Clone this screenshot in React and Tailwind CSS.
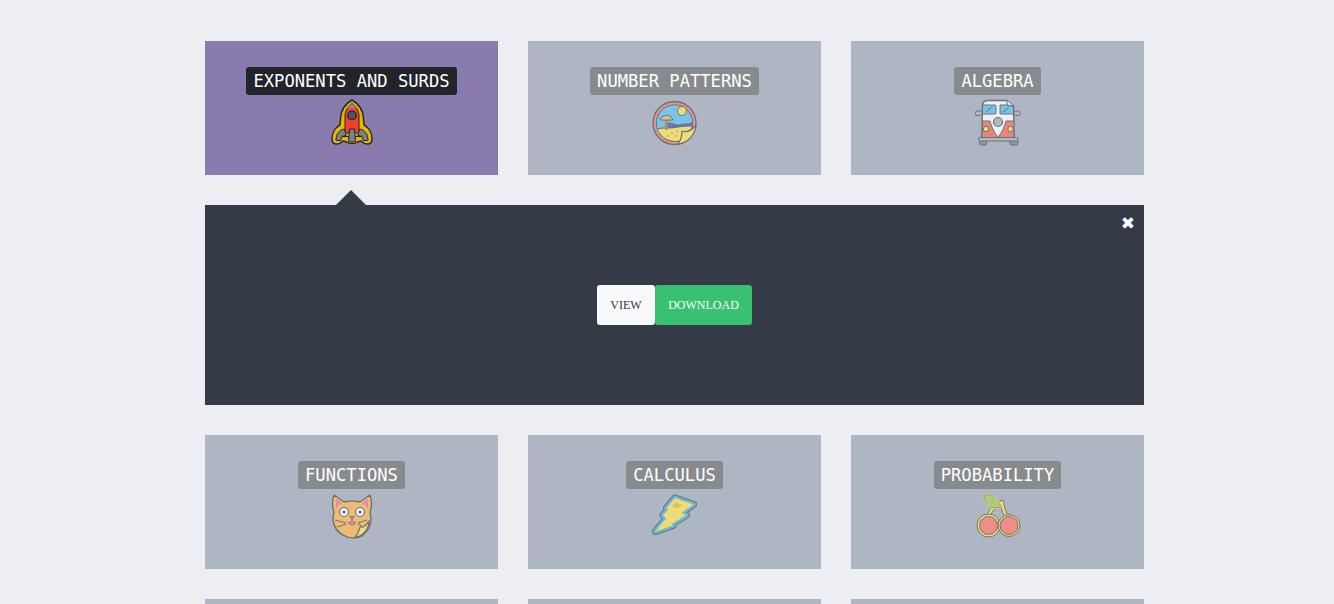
import React from 'react';

const outline = '#5c6066';

function Rocket() {
  const shell = 'M24 2 C31 6 35 13 35.5 20 L36 27 C40 29 44 34 44 41 C44 44.500 42 46 39.500 46 C37 46 35 45 33 43 L29 44 C27 46 21 46 19 44 L15 43 C13 45 11 46 8.500 46 C6 46 4 44.500 4 41 C4 34 8 29 12 27 L12.5 20 C13 13 17 6 24 2 Z';
  return (
    <svg viewBox="0 0 48 48" className="w-12 h-12">
      <path d={shell} fill="#e6b800" stroke="#26282c" strokeWidth="1.500" strokeLinejoin="round" />
      <path d="M24 5.500 C28 8 31 13 31 18 L31 35 L17 35 L17 18 C17 13 20 8 24 5.500 Z" fill="#f0402f" stroke="#26282c" strokeWidth="1" />
      <path d="M19.500 10 C21 8 23 6.500 24 6 C25 6.500 27 8 28.500 10 Z" fill="#8b8e94" />
      <circle cx="24" cy="17.500" r="4.300" fill="#4d5560" stroke="#26282c" strokeWidth="1.200" />
      <path d="M16.500 31 C11 32 8 36 8 42.500 L13 42.500 C13 39 15 37.500 18 37.500 Z" fill="#7b8087" stroke="#26282c" strokeWidth="1" strokeLinejoin="round" />
      <path d="M31.500 31 C37 32 40 36 40 42.500 L35 42.500 C35 39 33 37.500 30 37.500 Z" fill="#7b8087" stroke="#26282c" strokeWidth="1" strokeLinejoin="round" />
      <path d="M14 38.500 L34 38.500" stroke="#26282c" strokeWidth="1.200" />
      <path d="M21.500 31 L26.500 31 L27.500 43 C25.500 44.500 22.500 44.500 20.500 43 Z" fill="#7b8087" stroke="#26282c" strokeWidth="1" strokeLinejoin="round" />
    </svg>
  );
}

function Beach() {
  return (
    <svg viewBox="0 0 48 48" className="w-12 h-12">
      <circle cx="23.500" cy="25" r="21.500" fill="#ef8c7c" stroke={outline} strokeWidth="1.300" />
      <circle cx="23.500" cy="25" r="18.200" fill="#6fc7ef" stroke={outline} strokeWidth="1" />
      <circle cx="31" cy="13" r="4.500" fill="#ffe763" stroke={outline} strokeWidth="1" />
      <path d="M14 25 C20 23 25 28 30 26 C34 25 38 26 41.500 24 L41.500 30 L14 32 Z" fill="#4f6bb0" />
      <path d="M6 31 C12 29 20 31 27 29 C33 28 38 28 41 28 C41 36 35 42 29 43 C20 45 10 41 6 31 Z" fill="#ffe763" stroke={outline} strokeWidth="1" />
      <path d="M15.500 32 L15.500 21" stroke="#b98a4e" strokeWidth="2.500" />
      <path d="M9 22 C11 16 20 16 22 22 Z" fill="#f0c864" stroke={outline} strokeWidth="1" />
      <path d="M27 46 C30 42 31 38 31 33 C36 35 40 33 45 27 C44 37 37 45 27 46 Z" fill="#ffe763" stroke={outline} strokeWidth="1.200" strokeLinejoin="round" />
      <circle cx="21" cy="35" r=".8" fill="#a9842e" />
      <circle cx="26" cy="33" r=".8" fill="#a9842e" />
      <circle cx="17" cy="38" r=".8" fill="#a9842e" />
      <circle cx="25" cy="38" r=".8" fill="#a9842e" />
    </svg>
  );
}

function Bus() {
  return (
    <svg viewBox="0 0 48 48" className="w-12 h-12">
      <rect x="5.500" y="41" width="7" height="6" rx="1.500" fill="#8b9098" stroke={outline} />
      <rect x="36" y="41" width="8" height="6" rx="1.500" fill="#8b9098" stroke={outline} />
      <path d="M8.500 8 C8.500 4 11 2.500 14 2.500 L33 2.500 L39.500 8 L40 38 C40 40 39 41 37 41 L11 41 C9 41 8 40 8 38 Z" fill="#ffffff" stroke={outline} strokeWidth="1.400" strokeLinejoin="round" />
      <path d="M8.500 23 L16 23 C18 31 22 37 24 39 C26 37 30 31 32 23 L40 23 L40 38 C40 40 39 41 37 41 L11 41 C9 41 8 40 8 38 Z" fill="#f77b6b" stroke={outline} />
      <rect x="8.500" y="7" width="13.500" height="9" rx="1" fill="#6fc7ef" stroke={outline} />
      <path d="M26 7 L35 7 L39.500 9 L39.500 16 L26 16 Z" fill="#6fc7ef" stroke={outline} />
      <path d="M33 2.500 L33 7 L39.500 8" fill="#fff" stroke={outline} />
      <path d="M12 14 L18 9 M29 14 L35 9" stroke="#4f7fa8" strokeWidth="1.200" />
      <circle cx="24" cy="24" r="4.500" fill="#b4b8be" stroke={outline} strokeWidth="1.200" />
      <circle cx="12" cy="31" r="2.700" fill="#ffe763" stroke={outline} />
      <circle cx="36.500" cy="31" r="2.700" fill="#ffe763" stroke={outline} />
      <rect x="1.500" y="13" width="6.500" height="4.500" rx="1.500" fill="#b4b8be" stroke={outline} />
      <rect x="40" y="13" width="6" height="4.500" rx="1.500" fill="#b4b8be" stroke={outline} />
      <rect x="4.500" y="39.500" width="39.500" height="3.500" rx="1.500" fill="#b4b8be" stroke={outline} />
    </svg>
  );
}

function Cat() {
  return (
    <svg viewBox="0 0 48 48" className="w-12 h-12">
      <path d="M6 3 L16 10 C20 9 28 9 32 10 L42 3 C44 9 44 15 42 20 C44 29 42 37 36 42 C31 47 21 47 15 43 C7 39 3 29 6 20 C4 15 4 9 6 3 Z" fill="#ffbd5e" stroke={outline} strokeWidth="1.400" strokeLinejoin="round" />
      <path d="M8 7 L14 11 C11 12 9 14 8 17 Z" fill="#f27ba0" />
      <path d="M40 7 L34 11 C37 12 39 14 40 17 Z" fill="#f27ba0" />
      <circle cx="16" cy="20" r="4.500" fill="#fff" stroke={outline} strokeWidth="1.200" />
      <circle cx="32" cy="20" r="4.500" fill="#fff" stroke={outline} strokeWidth="1.200" />
      <circle cx="16" cy="20" r="1.500" fill="#555" />
      <circle cx="32" cy="20" r="1.500" fill="#555" />
      <path d="M22 24.500 L26 24.500 L24 27.500 Z" fill="#ef6c90" stroke={outline} strokeWidth=".8" />
      <path d="M24 27.500 L24 29.500 M20.500 30 C21 34 27 34 27.500 30 C26 30.500 25 30 24 29.500 C23 30 22 30.500 20.500 30 Z" fill="#ef8ca8" stroke={outline} strokeWidth=".8" />
      <path d="M7 28 L18 31 M9 35 L18 32 M30 31 L39 28 M30 32 L34 34" stroke={outline} strokeWidth="1" />
      <path d="M27 45.500 C30 42 31 39 32 35 C36 36 38 33 41 29 C41 37 35 44 27 45.500 Z" fill="#ffe763" stroke={outline} strokeWidth="1.200" strokeLinejoin="round" />
    </svg>
  );
}

function Bolt() {
  const d = 'M24 6 L42.500 12.500 L30.500 21 L35.500 23 L20.500 32 L22 33.500 L4.500 39.500 L15 26.500 L12 23 L17 18 L15.500 16 Z';
  return (
    <svg viewBox="0 0 48 48" className="w-12 h-12">
      <path d={d} fill="#ffe763" stroke={outline} strokeWidth="7" strokeLinejoin="round" />
      <path d={d} fill="#ffe763" stroke="#5cb7dc" strokeWidth="5" strokeLinejoin="round" />
      <path d={d} fill="#ffe763" />
      <path d="M24 10 L32 13 L26 16 L21 15 Z" fill="#f2c24a" />
    </svg>
  );
}

function Cherries() {
  return (
    <svg viewBox="0 0 48 48" className="w-12 h-12">
      <path d="M15 24 C16 18 22 13 28 10 C28 15 30 19 32 24" fill="none" stroke={outline} strokeWidth="4" strokeLinejoin="round" />
      <path d="M15 24 C16 18 22 13 28 10 C28 15 30 19 32 24" fill="none" stroke="#ffe763" strokeWidth="2.500" strokeLinejoin="round" />
      <path d="M10 3 C17 2 25 7 26.500 15 C19 18 11 13 10 3 Z" fill="#a5d16c" stroke="#ffe763" strokeWidth="2" strokeLinejoin="round" />
      <path d="M10 3 C17 2 25 7 26.500 15 C19 18 11 13 10 3 Z" fill="none" stroke={outline} strokeWidth=".7" strokeLinejoin="round" />
      <circle cx="14.500" cy="33.500" r="11.500" fill="#ffe763" stroke={outline} strokeWidth="1" />
      <circle cx="35" cy="33.500" r="11" fill="#ffe763" stroke={outline} strokeWidth="1" />
      <circle cx="14.500" cy="33.500" r="9" fill="#ff8677" stroke={outline} strokeWidth="1" />
      <circle cx="35" cy="33.500" r="9" fill="#ff8677" stroke={outline} strokeWidth="1" />
    </svg>
  );
}

function TopicCard({ title, icon, active }) {
  return (
    <div className={`h-[134px] flex flex-col items-center pt-[26px] ${active ? 'bg-[#8a7bae]' : 'bg-[#aeb6c4]'}`}>
      <span className={`h-[28px] px-[7px] rounded-[3px] text-[17.15px] leading-[28px] whitespace-nowrap text-white ${active ? 'bg-[#212529]' : 'bg-[#888b8e]'}`}>
        {title}
      </span>
      <div className={`mt-[3px] ${active ? '' : 'opacity-80'}`}>{icon}</div>
    </div>
  );
}

export default function App() {
  return (
    <div className="h-[604px] overflow-hidden bg-[#eceef2] pt-[41px] pl-[205px] font-['DejaVu_Sans_Mono',monospace]">
      <div className="grid grid-cols-3 gap-[30px] w-[939px]">
        <TopicCard title="EXPONENTS AND SURDS" icon={<Rocket />} active />
        <TopicCard title="NUMBER PATTERNS" icon={<Beach />} />
        <TopicCard title="ALGEBRA" icon={<Bus />} />

        <div className="col-span-3 relative h-[200px] bg-[#343a46] flex items-center justify-center font-['Liberation_Serif',serif] text-[12px]">
          <div className="absolute top-[-15px] left-[131px] w-0 h-0 border-x-[15px] border-x-transparent border-b-[15px] border-b-[#343a46]" />
          <span className="absolute top-[6px] right-[9px] text-white text-[17px] leading-6 font-['DejaVu_Sans',sans-serif]">✖</span>
          <button className="h-10 w-[58px] bg-[#f8f9fa] text-[#343a46] rounded-[3px]">VIEW</button>
          <button className="h-10 w-[97px] bg-[#38c172] text-white rounded-[3px]">DOWNLOAD</button>
        </div>

        <TopicCard title="FUNCTIONS" icon={<Cat />} />
        <TopicCard title="CALCULUS" icon={<Bolt />} />
        <TopicCard title="PROBABILITY" icon={<Cherries />} />

        <div className="h-[134px] bg-[#aeb6c4]" />
        <div className="h-[134px] bg-[#aeb6c4]" />
        <div className="h-[134px] bg-[#aeb6c4]" />
      </div>
    </div>
  );
}
